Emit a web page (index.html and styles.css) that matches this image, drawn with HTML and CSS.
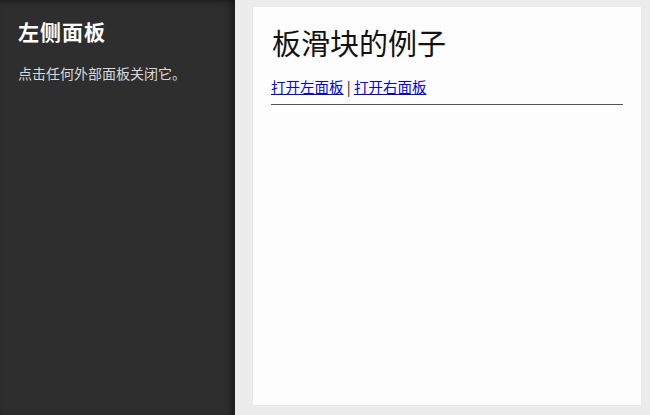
FILE: index.html
```html
<!DOCTYPE html>
<html lang="zh">
<head>
<meta charset="utf-8">
<title>板滑块的例子</title>
<link rel="stylesheet" href="styles.css">
</head>
<body>
<div class="layout">
  <aside class="panel">
    <h2 class="panel-title">左侧面板</h2>
    <p class="panel-text">点击任何外部面板关闭它。</p>
  </aside>
  <main class="page">
    <div class="card">
      <h1 class="card-title">板滑块的例子</h1>
      <p class="links"><a href="#left">打开左面板</a> | <a href="#right">打开右面板</a></p>
      <hr class="rule">
    </div>
  </main>
</div>
</body>
</html>
```

FILE: styles.css
```css
html, body {
  margin: 0;
  padding: 0;
  height: 100%;
}
body {
  background: #ececec;
  font-family: "Noto Sans CJK SC", "Liberation Sans", sans-serif;
}
.layout {
  display: flex;
  height: 415px;
}
.panel {
  width: 235px;
  flex: none;
  background: #2e2e2e;
  box-shadow: inset -6px 0 6px -2px rgba(0,0,0,0.35), inset 0 6px 6px -4px rgba(0,0,0,0.3);
  padding: 16px 17px 0 18px;
  box-sizing: border-box;
  color: #fff;
}
.panel-title {
  margin: 0;
  font-size: 21px;
  line-height: 30px;
  font-weight: 700;
  letter-spacing: 1px;
  color: #fff;
}
.panel-text {
  margin: 17px 0 0;
  font-size: 14px;
  line-height: 20px;
  color: #d8d8d8;
}
.page {
  flex: 1;
  padding: 7px 9px 10px 18px;
  display: flex;
}
.card {
  flex: 1;
  background: #fdfdfd;
  padding: 0 18px;
  box-shadow: 0 0 1px rgba(0,0,0,0.08);
}
.card-title {
  margin: 16px 0 0 1px;
  font-size: 29px;
  line-height: 38px;
  font-weight: 400;
  color: #111;
}
.links {
  margin: 16px 0 0;
  font-size: 14.5px;
  line-height: 20px;
  color: #111;
}
.links a {
  color: #0000ee;
}
.rule {
  margin: 7px 0 0;
  border: 0;
  border-top: 1px solid #555;
  height: 0;
}
```
